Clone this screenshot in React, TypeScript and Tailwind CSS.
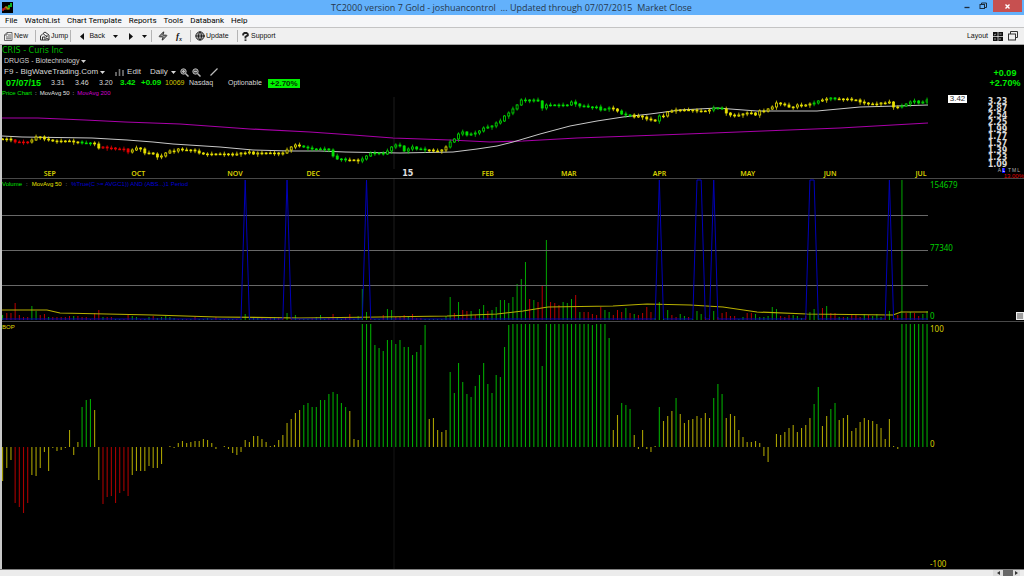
import { Globe, Zap } from "lucide-react";

const GREEN = "#00e000";
const YELLOW = "#e8e000";
const RED = "#e80000";

const STEP = 4.183;
const barX = (i: number) => 0.6 + i * STEP;

export default function App() {
  return (
    <div className="flex min-h-screen w-full flex-col overflow-hidden bg-black font-['Liberation_Sans',sans-serif] text-[8px] leading-[10px]">
      <TitleBar />
      <MenuBar />
      <Toolbar />
      <main className="flex flex-1 flex-col border-l-2 border-[#c8c8c8]">
        <PricePanel />
        <VolumePanel />
        <BopPanel />
      </main>
      <ScrollBar />
    </div>
  );
}

const TitleBar = () => (
  <header className="flex h-[15px] items-center bg-[#63b1fb] pl-0.5">
    <div className="w-[62px]">
      <svg className="h-[11px] w-[11px]" viewBox="0 0 11 11">
        <rect width="11" height="11" fill="#000" />
        <path d="M1 9V7h2V5" stroke="#d02020" strokeWidth="1.5" fill="none" />
        <path d="M3 5h2v2h2V5" stroke="#c8b800" strokeWidth="1.2" fill="none" />
        <path d="M7 6V4h2V1" stroke="#10b020" strokeWidth="2" fill="none" />
      </svg>
    </div>
    <h1 className="flex-1 whitespace-pre text-center font-['Open_Sans',sans-serif] text-[9px] leading-[15px] text-[#26384c]">
      {"TC2000 version 7 Gold - joshuancontrol  ... Updated through 07/07/2015  Market Close"}
    </h1>
    <div className="flex h-full items-start pr-0.5 text-[#1c2c3c]">
      <button aria-label="Minimize" className="flex h-3 w-4 items-center justify-center">
        <svg className="h-2 w-2" viewBox="0 0 8 8">
          <path d="M1.5 5.5h5" stroke="currentColor" strokeWidth="1.3" />
        </svg>
      </button>
      <button aria-label="Restore" className="flex h-3 w-4 items-center justify-center">
        <svg className="h-2 w-2" viewBox="0 0 8 8" fill="none" stroke="currentColor">
          <path d="M2.5 2V1h5v4.5H6" />
          <rect x="1" y="2.5" width="4.5" height="4" />
        </svg>
      </button>
      <button aria-label="Close" className="ml-0.5 flex h-3 w-[29px] items-center justify-center bg-[#c75050]">
        <svg className="h-[5px] w-[5px]" viewBox="0 0 5 5">
          <path d="M.5 .5l4 4M4.5 .5l-4 4" stroke="#fff" strokeWidth="1.4" />
        </svg>
      </button>
    </div>
  </header>
);

const menus = ["File", "WatchList", "Chart Template", "Reports", "Tools", "Databank", "Help"];

const MenuBar = () => (
  <nav className="flex h-[13px] items-center gap-[7px] border-b border-[#c4c4c4] bg-[#f5f6f8] pl-[5px] font-['Roboto',sans-serif] text-[8px] text-black">
    {menus.map((menu) => (
      <button key={menu}>{menu}</button>
    ))}
  </nav>
);

const Separator = () => <span className="h-3 w-px bg-[#b4b4b4]" />;

const Caret = () => (
  <svg className="h-[3px] w-[5px]" viewBox="0 0 5 3">
    <path d="M0 0h5L2.5 3z" fill="currentColor" />
  </svg>
);

const Toolbar = () => (
  <div className="flex h-[17px] items-center border-b border-[#a8a8a8] bg-[#f0f0f0] pl-1 pr-1.5 text-[7px] text-[#101010]">
    <button className="flex w-[31px] items-center gap-px">
      <svg className="h-[9px] w-[9px]" viewBox="0 0 9 9" fill="none" stroke="#444" strokeWidth=".8">
        <path d="M3 .5h5v8H.5V3zM3 .5V3H.5M4 3h3M2 5h5M2 6.8h5" />
      </svg>
      New
    </button>
    <Separator />
    <button className="ml-1 flex w-[30px] items-center gap-px">
      <svg className="h-2.5 w-2.5" viewBox="0 0 10 10" fill="none" stroke="#333" strokeWidth="1">
        <path d="M.5 9V5L3 2.5 5 1l4 3v5zM2.5 9V6H5v3M6 5h2M6 7l3 1.5M3 2.5L7 6" />
      </svg>
      Jump
    </button>
    <Separator />
    <button className="ml-[9px] flex w-[25px] items-center justify-between">
      <svg className="h-[7px] w-1" viewBox="0 0 4 7">
        <path d="M4 0v7L0 3.5z" fill="#111" />
      </svg>
      Back
    </button>
    <button aria-label="Back history" className="ml-1.5 flex w-[9px] justify-center">
      <Caret />
    </button>
    <button aria-label="Forward" className="ml-[7px] flex w-2 justify-center">
      <svg className="h-[7px] w-1" viewBox="0 0 4 7">
        <path d="M0 0v7l4-3.5z" fill="#111" />
      </svg>
    </button>
    <button aria-label="Forward history" className="ml-[5px] mr-0.5 flex w-[9px] justify-center">
      <Caret />
    </button>
    <Separator />
    <button aria-label="Alerts" className="ml-1.5">
      <Zap className="h-2.5 w-2.5" fill="#999" strokeWidth={2} />
    </button>
    <button aria-label="Formula" className="ml-2 mr-2 font-['Liberation_Serif',serif] text-[9px] font-bold italic">
      f<sub className="text-[6px]">x</sub>
    </button>
    <Separator />
    <button className="ml-1 flex w-[42px] items-center gap-px">
      <Globe className="h-2.5 w-2.5" fill="#aaa" strokeWidth={2} />
      Update
    </button>
    <Separator />
    <button className="ml-1 flex items-center gap-0.5">
      <svg className="h-[9px] w-[7px]" viewBox="0 0 7 9" fill="none" stroke="#222">
        <path d="M1.2 3.4V2.2L2.4 1h2.2l1.2 1.2v1.2L3.5 4.8V6.6" strokeWidth="1.9" />
        <path d="M3.5 7.4v1.5" strokeWidth="1.9" />
      </svg>
      Support
    </button>
    <div className="ml-auto flex items-center gap-[5px]">
      <span>Layout</span>
      <button aria-label="Panes">
        <svg className="block h-[9px] w-2.5" viewBox="0 0 10 9">
          <rect width="10" height="9" fill="#111" />
          <path d="M0 4.5h10M5 0v9" stroke="#ddd" strokeWidth=".8" />
          <path d="M1 3l2-1M6.5 2h2M2 6v2M7 6v2" stroke="#aaa" strokeWidth=".9" />
        </svg>
      </button>
      <button aria-label="Cascade windows">
        <svg className="block h-2.5 w-2.5" viewBox="0 0 10 10" fill="none" stroke="#333">
          <path d="M2.5 3V.5h7v6H8" />
          <rect x=".5" y="3" width="7" height="6" />
        </svg>
      </button>
    </div>
  </div>
);

const Zoom = ({ label, inner }: { label: string; inner: string }) => (
  <button aria-label={label} className="text-[#b8b8b8]">
    <svg className="block h-[9px] w-[9px]" viewBox="0 0 9 9" fill="none" stroke="currentColor">
      <circle cx="3.5" cy="3.5" r="2.7" fill="#555" />
      <path d={inner} />
      <path d="M5.5 5.5L8.5 8.5" strokeWidth="1.5" />
    </svg>
  </button>
);

const PricePanel = () => (
  <section className="flex h-[134px] border-b border-[#484848]">
    <div className="flex min-w-0 flex-1 flex-col">
      <h2 className="font-['DejaVu_Sans',sans-serif] text-[8px] leading-[11px] text-[#00b800]">CRIS - Curis Inc</h2>
      <button className="flex items-center gap-0.5 pl-0.5 text-[7px] text-[#d0d0d0]">
        DRUGS - Biotechnology <Caret />
      </button>
      <div className="flex h-3 items-center pl-0.5 text-[#d8d8d8]">
        <button className="flex items-center gap-0.5">
          F9 - BigWaveTrading.Com <Caret />
        </button>
        <button className="ml-2.5 flex items-center gap-[3px]">
          <svg className="h-[7px] w-[9px]" viewBox="0 0 9 7">
            <path d="M1 7V3M4.5 7V0M8 7V1" stroke="#777" strokeWidth="1.6" />
          </svg>
          Edit
        </button>
        <button className="ml-[9px] flex items-center gap-[3px]">
          Daily <Caret />
        </button>
        <div className="ml-1 flex gap-[3px]">
          <Zoom label="Zoom in" inner="M2 3.5h3M3.5 2v3" />
          <Zoom label="Zoom out" inner="M2 3.5h3" />
        </div>
        <button aria-label="Draw" className="ml-[9px]">
          <svg className="block h-2 w-2" viewBox="0 0 8 8">
            <path d="M.5 7.5L7.5.5" stroke="#bbb" strokeWidth="1.3" />
          </svg>
        </button>
      </div>
      <div className="flex h-[10px] items-center pl-1 text-[7px] text-[#d8d8d8]">
        <span className="w-[45px] text-[9px] font-bold text-[#00f000]">07/07/15</span>
        <span className="w-6">3.31</span>
        <span className="w-6">3.46</span>
        <span className="w-[21px]">3.20</span>
        <span className="w-[21px] text-[8px] font-bold text-[#00f000]">3.42</span>
        <span className="w-6 text-[8px] font-bold text-[#00f000]">+0.09</span>
        <span className="w-6 text-[#d0c800]">10069</span>
        <span className="w-[39px]">Nasdaq</span>
        <span className="w-10">Optionable</span>
        <span className="w-8 bg-[#00f000] text-center text-[8px] font-bold leading-[9px] text-[#003000]">+2.70%</span>
      </div>
      <div className="flex h-[9px] gap-[3px] text-[6px] text-[#e0e0e0]">
        <span className="text-[#00e800]">Price Chart</span>:<span>MovAvg 50</span>:
        <span className="text-[#d000d0]">MovAvg 200</span>
      </div>
      <PricePlot />
      <MonthAxis />
    </div>
    <div className="flex w-[96px] flex-col">
      <div className="flex flex-col items-center pl-[58px] pt-[23px] text-[9px] font-bold leading-[10px] text-[#00f000]">
        <span>+0.09</span>
        <span>+2.70%</span>
      </div>
      <div className="mt-[7px] flex items-start justify-between pr-2">
        <span className="ml-5 w-[19px] bg-white text-center text-[8px] leading-2 text-[#303030]">3.42</span>
        <ol className="mt-[3px] flex w-[37px] flex-col items-center font-['DejaVu_Sans',sans-serif] text-[8px] font-bold leading-[7px] text-[#d8d8d8]">
          {priceTicks.map((tick) => (
            <li key={tick}>{tick}</li>
          ))}
        </ol>
      </div>
      <div className="flex justify-end gap-px pr-1 text-[5px] leading-[5px] text-[#b0b0b0]">
        <button>A</button>
        <button className="bg-[#0000ff] text-white">L</button>
        <button className="ml-0.5">T</button>
        <button>M</button>
        <button>L</button>
      </div>
      <span className="text-right text-[6px] leading-[6px] text-[#e00000]">13.00%</span>
    </div>
  </section>
);

const priceTicks = ["3.23", "2.87", "2.54", "2.25", "1.99", "1.77", "1.57", "1.39", "1.23", "1.09"];

// trading days between the labels
const months = [
  { label: "", days: 10 },
  { label: "SEP", days: 21 },
  { label: "OCT", days: 23 },
  { label: "NOV", days: 19 },
  { label: "DEC", days: 22 },
  { label: "15", days: 20 },
  { label: "FEB", days: 19 },
  { label: "MAR", days: 22 },
  { label: "APR", days: 21 },
  { label: "MAY", days: 20 },
  { label: "JUN", days: 22 },
  { label: "JUL", days: 3 },
];

const MonthAxis = () => (
  <div className="flex h-[9px] font-['Noto_Sans',sans-serif] text-[7px] font-semibold leading-[9px] text-[#d8d000]">
    {months.map(({ label, days }) => (
      <span
        key={label}
        className={label === "15" ? "pl-1 font-['DejaVu_Sans',sans-serif] text-[8px] font-bold text-[#e0e0e0]" : ""}
        style={{ width: `${(days / 222) * 100}%` }}
      >
        {label}
      </span>
    ))}
  </div>
);

const closes = [
  139, 139, 140, 142, 142, 142, 142, 140, 137, 137, 139, 140, 141, 141, 141, 141, 141, 142, 142, 143,
  143, 143, 144, 148, 147, 148, 148, 149, 149, 149, 152, 150, 148, 149, 153, 153, 154, 157, 156, 153,
  151, 151, 149, 150, 150, 150, 151, 153, 154, 154, 154, 154, 154, 154, 154, 155, 154, 153, 153, 152,
  154, 153, 153, 153, 153, 153, 154, 153, 150, 147, 145, 146, 147, 148, 149, 149, 149, 149, 150, 156,
  159, 159, 160, 160, 160, 161, 159, 156, 153, 153, 153, 154, 151, 147, 145, 146, 151, 149, 147, 149,
  149, 150, 150, 151, 151, 150, 147, 142, 139, 134, 132, 135, 134, 133, 131, 128, 127, 126, 123, 121,
  116, 113, 109, 105, 100, 100, 101, 100, 101, 108, 105, 105, 105, 105, 105, 105, 102, 104, 106, 106,
  107, 107, 107, 110, 109, 108, 109, 111, 114, 115, 115, 117, 116, 117, 119, 120, 121, 116, 116, 112,
  111, 110, 110, 110, 110, 110, 111, 111, 111, 110, 108, 108, 109, 113, 115, 116, 115, 114, 113, 113,
  115, 111, 111, 109, 107, 103, 104, 105, 107, 107, 105, 106, 105, 104, 103, 101, 100, 99, 98, 99,
  99, 99, 99, 100, 100, 102, 103, 104, 104, 104, 103, 103, 102, 107, 107, 106, 104, 102, 101, 103,
  102, 100,
];

// [first bar, colour] for every change of trend colour
const trends: [number, string][] = [
  [0, YELLOW], [3, RED], [7, YELLOW], [19, GREEN], [22, YELLOW], [24, RED], [31, YELLOW],
  [72, GREEN], [83, YELLOW], [86, GREEN], [102, YELLOW], [107, GREEN], [146, YELLOW],
  [148, GREEN], [151, YELLOW], [157, GREEN], [158, YELLOW], [170, GREEN], [173, YELLOW],
  [194, GREEN], [196, YELLOW], [198, GREEN], [200, YELLOW], [215, GREEN],
];

const trendColor = (i: number) => trends.filter(([start]) => start <= i).pop()![1];

const PricePlot = () => (
  <svg className="h-[72px] w-full" viewBox="2 97 926 72" preserveAspectRatio="none">
    <path d="M394 97V169" stroke="#1c1c1c" />
    <path
      d="M2 118L38 118L85 120L125 122L180 124L250 129L310 132L353 135L393 138L450 140L490 142L523 141L577 138L633 136L713 133L763 131L840 128L928 123"
      fill="none"
      stroke="#a800a8"
      strokeWidth="1.2"
    />
    <path
      d="M2 136L22 137L92 138L127 140L153 142L173 144L220 147L253 150L290 151L320 151L345 152L400 153L453 152L477 149L497 146L513 142L540 134L570 126L597 121L623 117L650 114L680 110L717 108L757 111L817 111L860 107L897 106L928 105"
      fill="none"
      stroke="#c8c8c8"
    />
    <g transform="translate(2 0)">
      {closes.map((close, i) => {
        const open = closes[Math.max(i - 1, 0)];
        const color = trendColor(i);
        const top = Math.min(open, close);
        const height = Math.abs(close - open);
        return (
          <g key={i} stroke={color} strokeWidth="0.8">
            <path d={`M${barX(i)} ${top - 1 - (i % 3) * 0.7}V${top + height + 1 + ((i * 7) % 4) * 0.6}`} />
            <rect
              x={barX(i) - 1}
              y={top}
              width="2"
              height={Math.max(height, 0.8)}
              fill={close < open ? "#000" : color}
            />
          </g>
        );
      })}
    </g>
  </svg>
);

// bar heights, negative on a down day
const volumes = [
  5, -7, -7, -17, -5, -3, -3, 14, 9, -5, -6, 3, -3, -3, -3, -3, -4, 4, -4, -3,
  -3, -1, -7, -10, 3, -3, -3, 1, 1, -1, -5, 4, 3, -1, 1, 3, -4, 2, 3, 4,
  3, 2, -1, 1, -1, 1, -3, 1, 1, 2, 1, -3, 1, -1, 1, 1, -1, 1, 6, 2,
  3, 3, -3, 1, -2, 3, -3, -3, 7, -3, 5, -1, 1, 1, -2, 3, 5, 1, -2, -6,
  2, 1, -2, -6, 1, 4, 31, 8, -3, 1, 1, -5, 11, 10, -3, -3, -5, 4, -6, -2,
  -2, 1, 1, 1, 1, 1, 4, 23, -7, 18, -10, -9, 9, -5, 11, 15, -9, 10, 13, 20,
  20, 17, 23, 36, 41, 58, -21, 20, -18, -35, 80, -18, -17, -15, 18, 17, 21, -25, 8, -8,
  -8, -6, -5, -13, 10, 8, -5, -10, -8, 12, -7, 6, -5, -7, -13, -8, 2, 18, 1, 10,
  -5, -3, 6, 4, -3, 1, 9, 6, -3, -5, 9, -3, -7, -8, -4, -4, 1, 3, -7, -7,
  6, 3, 3, 4, 13, 11, -4, -3, -5, 5, 4, 2, -4, 8, 11, 5, -12, 14, -7, -7,
  3, -3, 3, -5, -5, -3, 6, -5, 4, 6, 3, -5, 9, -2, -5, 140, -7, 8, -7, -4,
  6, 9,
];

// first and last bar of each stretch where the condition holds
const signals = [[58, 58], [68, 68], [87, 87], [157, 157], [166, 167], [170, 170], [193, 194], [212, 212]];

const signalPath =
  "M0 140" +
  signals
    .map(([from, to]) => `L${barX(from - 1)} 140L${barX(from)} 1L${barX(to)} 1L${barX(to + 1)} 140`)
    .join("") +
  "L926 140";

const VolumePanel = () => (
  <section className="relative flex h-[143px] border-b border-[#484848]">
    <svg className="h-[142px] min-w-0 flex-1" viewBox="0 0 926 142" preserveAspectRatio="none">
      <path d="M392 0V142" stroke="#1c1c1c" />
      {volumes.map((volume, i) => (
        <path key={i} d={`M${barX(i)} 141V${141 - Math.abs(volume)}`} stroke={volume > 0 ? "#00a800" : "#b80000"} />
      ))}
      <path d="M0 36.5H926M0 71.5H926M0 106.5H926" stroke="#686868" />
      <path
        d="M0 131L45 131L58 134L151 136L215 138L298 139L378 138L445 137L495 135L521 132L546 128L611 127L645 125L688 126L721 128L755 133L805 135L891 136L899 133L926 133"
        fill="none"
        stroke="#b8b000"
        strokeWidth="1.2"
      />
      <path d={signalPath} fill="none" stroke="#0000b8" />
    </svg>
    <div className="absolute left-0 top-0 flex gap-1 whitespace-nowrap text-[6px] text-[#a0a0a0]">
      <span className="text-[#00e800]">Volume</span>:<span className="text-[#e8e000]">MovAvg 50</span>:
      <span className="text-[#0000d8]">{"%True(C >= AVGC1)) AND (ABS...)1 Period"}</span>
    </div>
    <div className="flex w-[96px] flex-col justify-between pl-0.5 pt-px font-['Noto_Sans',sans-serif] text-[8px] text-[#00d000]">
      <span>154679</span>
      <span className="pb-[5px]">77340</span>
      <div className="flex items-center justify-between">
        <span>0</span>
        <button aria-label="Resize pane" className="h-2 w-2 border border-[#eee] bg-[#a0a0a0]" />
      </div>
    </div>
  </section>
);

const bop = [
  -34, -21, -13, -56, -60, -66, -56, -28, -29, -21, -5, -24, -1, -4, -3, -1, 17, -8, 5, 40,
  47, 48, 37, -33, -57, -50, -49, -56, -46, -44, -49, -28, -24, -24, -24, -19, -21, -21, -17, 0,
  1, -1, 4, 6, 4, 5, 6, 6, 8, 7, 4, -2, 0, 1, -2, -6, -8, -5, 7, 5,
  11, 11, 8, 5, 1, 2, 7, 12, 24, 28, 34, 37, 42, 44, 40, 40, 47, 47, 53, 55,
  53, 44, 40, 36, 8, 7, 123, 123, 123, 102, 99, 96, 107, 107, 103, 107, 100, 100, 92, 95,
  102, 122, 28, 29, 17, 15, 17, 75, 54, 84, 65, 53, 50, 61, 72, 84, 63, 54, 72, 70,
  100, 122, 123, 123, 123, 123, 123, 123, 123, 81, 123, 123, 123, 123, 123, 123, 123, 123, 123, 123,
  123, 122, 123, 123, 123, 109, 17, 32, 44, 42, 38, 12, -2, 17, -2, -5, 1, 40, 26, 31,
  36, 49, 33, 24, 27, 28, 31, 29, 34, 29, 49, 63, 53, 29, 33, 31, 17, 10, 5, 5,
  6, 4, -9, -15, 0, 13, 12, 15, 19, 22, 15, 19, 22, 29, 43, 60, 21, 31, 38, 44,
  27, 29, 32, 16, 19, 25, 29, 27, 26, 23, 19, 8, 28, 1, -2, 123, 123, 123, 123, 123,
  123, 123,
];

const bopColor = (value: number) => {
  if (value >= 38) return "#00a800";
  if (value <= -40) return "#a80000";
  return "#a8a000";
};

const BopPanel = () => (
  <section className="relative flex flex-1">
    <svg className="h-[247px] min-w-0 flex-1" viewBox="0 0 926 247" preserveAspectRatio="none">
      <path d="M392 0V247" stroke="#141414" />
      {bop.map((value, i) => (
        <path key={i} d={`M${barX(i)} 125V${125 - value}`} stroke={bopColor(value)} strokeWidth="1.1" />
      ))}
    </svg>
    <span className="absolute left-0 top-0 text-[6px] text-[#e0d800]">BOP</span>
    <div className="flex w-[96px] flex-col justify-between pl-0.5 pt-0.5 font-['Noto_Sans',sans-serif] text-[8px] text-[#d8d000]">
      <span>100</span>
      <span className="pb-1.5">0</span>
      <span>-100</span>
    </div>
  </section>
);

const ScrollBar = () => (
  <footer className="flex h-[7px] justify-end border-t border-[#808080] bg-[#ececec] pr-1">
    <button aria-label="Scroll left" className="flex w-2.5 items-center justify-center bg-[#dcdcdc]">
      <svg className="h-1 w-[3px]" viewBox="0 0 3 4">
        <path d="M3 0v4L0 2z" fill="#333" />
      </svg>
    </button>
    <span className="w-2.5 bg-[#686868]" />
    <button aria-label="Scroll right" className="flex w-[7px] items-center justify-center bg-[#dcdcdc]">
      <svg className="h-1 w-[3px]" viewBox="0 0 3 4">
        <path d="M0 0v4l3-2z" fill="#333" />
      </svg>
    </button>
  </footer>
);
